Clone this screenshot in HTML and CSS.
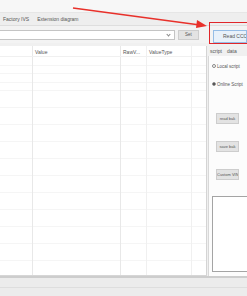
FILE: index.html
```html
<!DOCTYPE html>
<html lang="en">
<head>
    <meta charset="UTF-8">
    <meta name="viewport" content="width=device-width, initial-scale=1.0">
    <title>Factory IVS</title>
    <link rel="stylesheet" href="styles.css">
</head>
<body>
    <div class="window">
        <div class="titlebar"></div>

        <div class="tabs">
            <span class="tab">Factory IVS</span>
            <span class="tab">Extension diagram</span>
        </div>

        <div class="toolbar">
            <div class="combo">
                <span class="chevron"></span>
            </div>
            <button class="btn btn-set">Set</button>
            <div class="read-wrap">
                <button class="btn btn-read">Read CCC</button>
            </div>
        </div>

        <div class="main">
            <div class="grid">
                <div class="grid-head">
                    <div class="col col-id"></div>
                    <div class="col col-value">Value</div>
                    <div class="col col-raw">RawV...</div>
                    <div class="col col-type">ValueType</div>
                    <div class="col col-rest"></div>
                </div>
                <div class="grid-body">
                    <div class="col col-id"></div>
                    <div class="col col-value"></div>
                    <div class="col col-raw"></div>
                    <div class="col col-type"></div>
                    <div class="col col-rest"></div>
                </div>
            </div>

            <div class="side">
                <div class="side-tabs">
                    <span class="side-tab active">script</span>
                    <span class="side-tab">data</span>
                </div>
                <div class="side-page">
                    <label class="radio"><span class="dot"></span>Local script</label>
                    <label class="radio"><span class="dot checked"></span>Online Script</label>
                    <div class="side-buttons">
                        <button class="btn btn-small">read bak</button>
                        <button class="btn btn-small">save bak</button>
                        <button class="btn btn-small">Custom VIN</button>
                    </div>
                    <div class="log"></div>
                </div>
            </div>
        </div>

        <div class="statusbar">
            <div class="status-line"></div>
        </div>
    </div>

    <!-- annotation drawn over the screenshot -->
    <svg class="arrow" width="247" height="60" viewBox="0 0 247 60">
        <line x1="73" y1="8" x2="200" y2="25" stroke="#e8302a" stroke-width="1.3"/>
        <polygon points="207,26 197,20 196,28" fill="#e8302a"/>
    </svg>
    <div class="highlight"></div>
</body>
</html>
```

FILE: styles.css
```css
* {
    box-sizing: border-box;
}

body {
    margin: 0;
    width: 247px;
    height: 296px;
    overflow: hidden;
    font-family: "Liberation Sans", Arial, sans-serif;
    background: #f0f0f0;
    color: #555;
}

.window {
    display: flex;
    flex-direction: column;
    height: 296px;
}

.titlebar {
    height: 13px;
    background: #f7f7f7;
    border-bottom: 1px solid #e6e6e6;
}

.tabs {
    height: 13px;
    display: flex;
    align-items: center;
    gap: 8px;
    padding-left: 3px;
    font-size: 5px;
    color: #555;
    background: #eeeeee;
    border-bottom: 1px solid #dedede;
}

.toolbar {
    height: 17px;
    display: flex;
    align-items: center;
    background: #f3f3f3;
}

.combo {
    width: 175px;
    height: 10px;
    background: #fff;
    border: 1px solid #c4c4c4;
    border-left: none;
    position: relative;
}

.chevron {
    position: absolute;
    right: 4px;
    top: 2px;
    width: 3px;
    height: 3px;
    border-right: 1px solid #888;
    border-bottom: 1px solid #888;
    transform: rotate(45deg);
}

.btn {
    font-family: "Liberation Sans", Arial, sans-serif;
    font-size: 4.5px;
    color: #555;
    background: #e3e3e3;
    border: 1px solid #cdcdcd;
    padding: 0;
    white-space: nowrap;
    overflow: hidden;
}

.btn-set {
    width: 21px;
    height: 10px;
    margin-left: 3px;
}

.read-wrap {
    flex: 1;
    display: flex;
    justify-content: flex-end;
    height: 13px;
    align-items: center;
    margin-top: 3px;
}

.btn-read {
    width: 34px;
    height: 13px;
    background: #e8f1fa;
    border: 1px solid #95bde6;
    text-align: left;
    padding-left: 9px;
    font-size: 5px;
}

.main {
    flex: 1;
    display: flex;
    margin-top: 3px;
}

.grid {
    width: 207px;
    display: flex;
    flex-direction: column;
    background: #fff;
    border-right: 1px solid #d4d4d4;
    border-bottom: 1px solid #d6d6d6;
}

.grid-head {
    height: 11px;
    display: flex;
    font-size: 5px;
    color: #555;
    border-bottom: 1px solid #f0f0f0;
}

.grid-head .col {
    padding: 3px 0 0 2px;
}

.grid-body {
    flex: 1;
    display: flex;
    background: repeating-linear-gradient(to bottom, #fff 0, #fff 7.5px, #f5f5f5 7.5px, #f5f5f5 8.5px);
}

.col {
    border-right: 1px solid #f0f0f0;
}

.col-id {
    width: 33px;
    border-right-color: #e8e8e8;
}

.col-value {
    width: 88px;
    border-right-color: #e8e8e8;
}

.col-raw {
    width: 26px;
}

.col-type {
    width: 45px;
}

.col-rest {
    flex: 1;
    border-right: none;
}

.side {
    flex: 1;
    display: flex;
    flex-direction: column;
}

.side-tabs {
    height: 10px;
    display: flex;
    align-items: center;
    gap: 5px;
    padding-left: 3px;
    font-size: 5px;
    color: #555;
}

.side-page {
    flex: 1;
    display: flex;
    flex-direction: column;
    background: #fcfcfc;
    border-left: 1px solid #d8d8d8;
    margin-left: 1px;
    padding: 7px 0 4px 3px;
}

.radio {
    display: flex;
    align-items: center;
    gap: 1px;
    font-size: 4.5px;
    color: #555;
    height: 6px;
    margin-bottom: 12px;
    white-space: nowrap;
}

.dot {
    width: 4px;
    height: 4px;
    border-radius: 50%;
    border: 1px solid #888;
    background: #fff;
}

.dot.checked {
    background: radial-gradient(circle, #444 0, #444 1px, #fff 1.2px);
}

.side-buttons {
    display: flex;
    flex-direction: column;
    gap: 17px;
    margin-top: 14px;
    padding-left: 4px;
}

.btn-small {
    width: 23px;
    height: 11px;
    font-size: 4px;
}

.log {
    margin-top: 16px;
    flex: 1;
    background: #fff;
    border: 1px solid #a4a4a4;
    border-right: none;
    margin-bottom: 0;
}

.statusbar {
    height: 20px;
    background: #ececec;
    border-top: 2px solid #cdcdcd;
}

.status-line {
    margin-top: 9px;
    height: 1px;
    background: #dedede;
}

.arrow {
    position: absolute;
    left: 0;
    top: 0;
}

.highlight {
    position: absolute;
    left: 209px;
    top: 22px;
    width: 40px;
    height: 22px;
    border: 1.5px solid #e0262a;
}
```
